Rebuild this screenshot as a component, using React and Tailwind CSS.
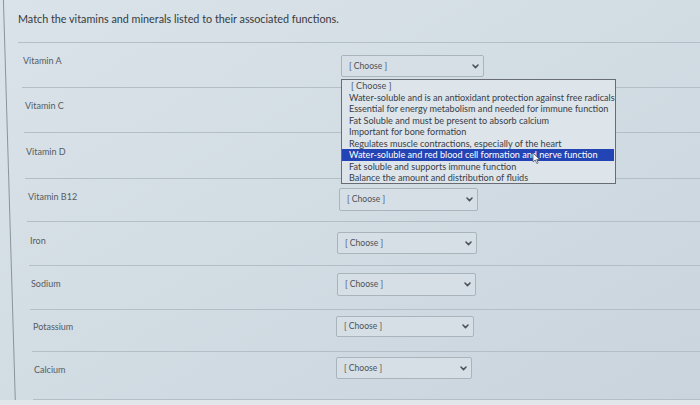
import React from "react";

const options = [
  "Water-soluble and is an antioxidant protection against free radicals",
  "Essential for energy metabolism and needed for immune function",
  "Fat Soluble and must be present to absorb calcium",
  "Important for bone formation",
  "Regulates muscle contractions, especially of the heart",
  "Water-soluble and red blood cell formation and nerve function",
  "Fat soluble and supports immune function",
  "Balance the amount and distribution of fluids",
];

const rows = [
  { label: "Vitamin A", ml: 22, h: 45, pt: 12, sel: { left: 341, mt: 12, w: 143, h: 22 }, open: true },
  { label: "Vitamin C", ml: 24, h: 45, pt: 12 },
  { label: "Vitamin D", ml: 25, h: 46, pt: 13 },
  { label: "Vitamin B12", ml: 27, h: 43, pt: 12, sel: { left: 339, mt: 9, w: 139, h: 23 } },
  { label: "Iron", ml: 29, h: 44, pt: 13, sel: { left: 337, mt: 10, w: 140, h: 22 } },
  { label: "Sodium", ml: 30, h: 44, pt: 12, sel: { left: 337, mt: 7, w: 139, h: 23 } },
  { label: "Potassium", ml: 32, h: 42, pt: 11, sel: { left: 336, mt: 6, w: 138, h: 21 } },
  { label: "Calcium", ml: 33, h: 48, pt: 12, sel: { left: 336, mt: 5, w: 136, h: 22 } },
];

function Chevron() {
  return (
    <svg width="7" height="5" viewBox="0 0 7 5" className="shrink-0">
      <path d="M1 1 L3.5 3.6 L6 1" fill="none" stroke="#4d545b" strokeWidth="1.6" strokeLinecap="round" strokeLinejoin="round" />
    </svg>
  );
}

function Select({ s, open }) {
  return (
    <div className="relative" style={{ marginTop: s.mt }}>
      <div
        className="flex items-center justify-between pl-[7px] pr-[4px] border border-[#a9b4bd] rounded-[2px] bg-[#d6dfe6] text-[8.6px] leading-[11px] text-[#4c535a]"
        style={{ width: s.w, height: s.h }}
      >
        <span>[ Choose ]</span>
        <Chevron />
      </div>
      {open && (
        <div className="absolute left-0 top-[24px] z-10 w-[275px] h-[105px] border border-[#676d73] bg-[#dde4ea] text-[9.1px] leading-[11.5px] text-[#394047]">
          <div className="pl-[9px] text-[#474e55]">[ Choose ]</div>
          {options.map((o, i) => (
            <div
              key={i}
              className={
                i === 5
                  ? "pl-[7px] bg-[#2344b4] text-white mr-[1px] whitespace-nowrap"
                  : "pl-[7px] whitespace-nowrap"
              }
            >
              {o}
            </div>
          ))}
          <svg className="absolute left-[190px] top-[72px]" width="9" height="13" viewBox="0 0 9 13">
            <path d="M1 1 L1 10 L3.2 8 L4.8 11.5 L6.2 10.9 L4.7 7.6 L7.6 7.6 Z" fill="#f4f6f8" stroke="#59606a" strokeWidth="0.8" strokeLinejoin="round" />
          </svg>
        </div>
      )}
    </div>
  );
}

export default function App() {
  return (
    <div className="relative w-[700px] h-[405px] overflow-hidden bg-gradient-to-br from-[#dae3e9] via-[#d2dce3] to-[#c9d4dd] font-['Lato','Noto_Sans',sans-serif]">
      <div className="absolute left-[9px] top-[-5px] w-[1px] h-[420px] bg-[#8a949c] rotate-[-1.7deg] origin-center" />
      <div className="ml-[18px] h-[43px] border-b border-[#b4bec7] pt-[13px] text-[10.8px] leading-[12px] text-[#353a40]">
        Match the vitamins and minerals listed to their associated functions.
      </div>
      {rows.map((r, i) => (
        <div
          key={i}
          className="flex border-b border-[#b4bec7]"
          style={{ marginLeft: r.ml, height: r.h, position: "relative", zIndex: r.open ? 10 : 0 }}
        >
          <div
            className="shrink-0 pl-[1px] text-[9px] leading-[11px] text-[#555c63]"
            style={{ width: (r.sel ? r.sel.left : 340) - r.ml, paddingTop: r.pt }}
          >
            {r.label}
          </div>
          {r.sel && <Select s={r.sel} open={r.open} />}
        </div>
      ))}
      <div className="absolute left-0 bottom-0 w-full h-[5px] bg-[#e1e7eb]" />
    </div>
  );
}
